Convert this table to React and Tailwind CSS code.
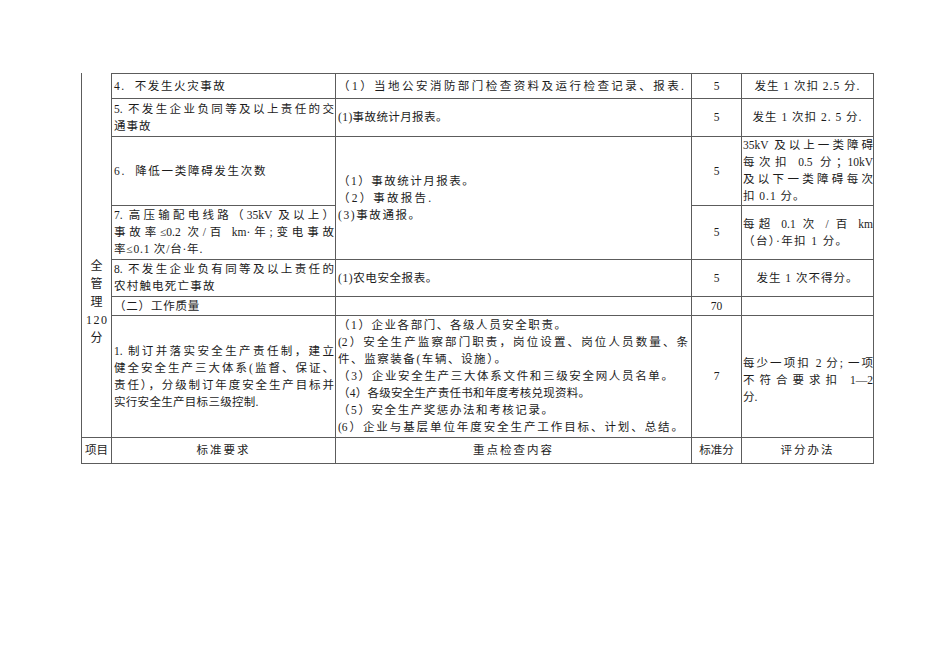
import React from "react";

const J = ({ w, children }) => (
  <div className={`${w} min-w-max [text-align-last:justify] [text-align:justify]`}>{children}</div>
);
const N = ({ className = "", children }) => (
  <div className={`whitespace-nowrap ${className}`}>{children}</div>
);

const cell = "border-r border-b border-[#5c5c5c] flex flex-col justify-center";

export default function App() {
  return (
    <div className="min-h-screen bg-white pt-[73px] pl-[81px] font-['Liberation_Serif','Noto_Sans_CJK_SC',serif] text-[11.5px] leading-[17px] text-[#1c1c1c]">
      <div className="grid w-[793px] grid-cols-[31px_224px_356px_50px_132px] grid-rows-[26px_38px_69px_54px_37px_19px_122px_26px]">
        {/* left merged column */}
        <div className="col-start-1 row-start-1 row-span-7 border-l border-r border-b border-[#5c5c5c] flex flex-col items-center pt-[184px] leading-[18px] text-[12px]">
          <div>全</div>
          <div>管</div>
          <div>理</div>
          <div className="tracking-[1.5px] pl-[1.5px]">120</div>
          <div>分</div>
        </div>

        {/* row 4 */}
        <div className={`${cell} col-start-2 row-start-1 border-t pl-[2px]`}>
          <N className="tracking-[1.6px]">4.&nbsp; 不发生火灾事故</N>
        </div>
        <div className={`${cell} col-start-3 row-start-1 border-t pl-[2px]`}>
          <J w="w-[346px]">（1）当地公安消防部门检查资料及运行检查记录、报表.</J>
        </div>
        <div className={`${cell} col-start-4 row-start-1 border-t items-center`}>5</div>
        <div className={`${cell} col-start-5 row-start-1 border-t items-center`}>
          <N className="tracking-[1px]">发生 1 次扣 2.5 分.</N>
        </div>

        {/* row 5 */}
        <div className={`${cell} col-start-2 row-start-2 pl-[2px]`}>
          <J w="w-[220px]">5. 不发生企业负同等及以上责任的交</J>
          <N className="tracking-[1px]">通事故</N>
        </div>
        <div className={`${cell} col-start-3 row-start-2 pl-[2px]`}>
          <N className="tracking-[0.4px]">(1)事故统计月报表。</N>
        </div>
        <div className={`${cell} col-start-4 row-start-2 items-center`}>5</div>
        <div className={`${cell} col-start-5 row-start-2 items-center`}>
          <N className="tracking-[1px]">发生 1 次扣 2. 5 分.</N>
        </div>

        {/* row 6 */}
        <div className={`${cell} col-start-2 row-start-3 pl-[2px]`}>
          <N className="tracking-[1.7px]">6.&nbsp; 降低一类障碍发生次数</N>
        </div>
        <div className={`${cell} col-start-3 row-start-3 row-span-2 pl-[2px]`}>
          <N className="tracking-[1.5px]">（1）事故统计月报表。</N>
          <N className="tracking-[2.2px]">（2）事故报告.</N>
          <N className="tracking-[1.6px]">(3)事故通报。</N>
        </div>
        <div className={`${cell} col-start-4 row-start-3 items-center`}>5</div>
        <div className={`${cell} col-start-5 row-start-3 pl-px`}>
          <J w="w-[130px]">35kV 及以上一类障碍</J>
          <J w="w-[130px]">每次扣 0.5 分；10kV</J>
          <J w="w-[130px]">及以下一类障碍每次</J>
          <N className="tracking-[1px]">扣 0.1 分。</N>
        </div>

        {/* row 7 */}
        <div className={`${cell} col-start-2 row-start-4 pl-[2px]`}>
          <J w="w-[220px]">7. 高压输配电线路（35kV 及以上）</J>
          <J w="w-[220px]">事故率≤0.2 次/百 km·年;变电事故</J>
          <N className="tracking-[0.8px]">率≤0.1 次/台·年.</N>
        </div>
        <div className={`${cell} col-start-4 row-start-4 items-center`}>5</div>
        <div className={`${cell} col-start-5 row-start-4 pl-px`}>
          <J w="w-[130px]">每超 0.1 次 / 百 km</J>
          <N className="tracking-[1.4px]">（台）·年扣 1 分。</N>
        </div>

        {/* row 8 */}
        <div className={`${cell} col-start-2 row-start-5 pl-[2px]`}>
          <J w="w-[220px]">8. 不发生企业负有同等及以上责任的</J>
          <N className="tracking-[1.2px]">农村触电死亡事故</N>
        </div>
        <div className={`${cell} col-start-3 row-start-5 pl-[2px]`}>
          <N className="tracking-[0.6px]">(1)农电安全报表。</N>
        </div>
        <div className={`${cell} col-start-4 row-start-5 items-center`}>5</div>
        <div className={`${cell} col-start-5 row-start-5 items-center`}>
          <N className="tracking-[1px]">发生 1 次不得分。</N>
        </div>

        {/* row (二) */}
        <div className={`${cell} col-start-2 row-start-6 pl-[2px]`}>
          <N className="tracking-[0.8px]">（二）工作质量</N>
        </div>
        <div className={`${cell} col-start-3 row-start-6`}></div>
        <div className={`${cell} col-start-4 row-start-6 items-center`}>70</div>
        <div className={`${cell} col-start-5 row-start-6`}></div>

        {/* row 1 */}
        <div className={`${cell} col-start-2 row-start-7 pl-[2px]`}>
          <J w="w-[220px]">1. 制订并落实安全生产责任制，建立</J>
          <J w="w-[220px]">健全安全生产三大体系(监督、保证、</J>
          <J w="w-[220px]">责任），分级制订年度安全生产目标并</J>
          <N className="tracking-[0.3px]">实行安全生产目标三级控制.</N>
        </div>
        <div className={`${cell} col-start-3 row-start-7 pl-[2px]`}>
          <J w="w-[228px]">（1）企业各部门、各级人员安全职责。</J>
          <J w="w-[350px]">(2）安全生产监察部门职责，岗位设置、岗位人员数量、条</J>
          <J w="w-[168px]">件、监察装备(车辆、设施）。</J>
          <J w="w-[335px]">（3）企业安全生产三大体系文件和三级安全网人员名单。</J>
          <J w="w-[252px]">（4）各级安全生产责任书和年度考核兑现资料。</J>
          <J w="w-[215px]">（5）安全生产奖惩办法和考核记录。</J>
          <J w="w-[345px]">(6）企业与基层单位年度安全生产工作目标、计划、总结。</J>
        </div>
        <div className={`${cell} col-start-4 row-start-7 items-center`}>7</div>
        <div className={`${cell} col-start-5 row-start-7 pl-px pt-[8px]`}>
          <J w="w-[130px]">每少一项扣 2 分; 一项</J>
          <J w="w-[130px]">不符合要求扣 1—2</J>
          <N>分.</N>
        </div>

        {/* header */}
        <div className={`${cell} col-start-1 row-start-8 border-l items-center`}>
          <N>项目</N>
        </div>
        <div className={`${cell} col-start-2 row-start-8 items-center`}>
          <N className="tracking-[2px]">标准要求</N>
        </div>
        <div className={`${cell} col-start-3 row-start-8 items-center`}>
          <N className="tracking-[2px]">重点检查内容</N>
        </div>
        <div className={`${cell} col-start-4 row-start-8 items-center`}>
          <N>标准分</N>
        </div>
        <div className={`${cell} col-start-5 row-start-8 items-center`}>
          <N className="tracking-[2px]">评分办法</N>
        </div>
      </div>
    </div>
  );
}
